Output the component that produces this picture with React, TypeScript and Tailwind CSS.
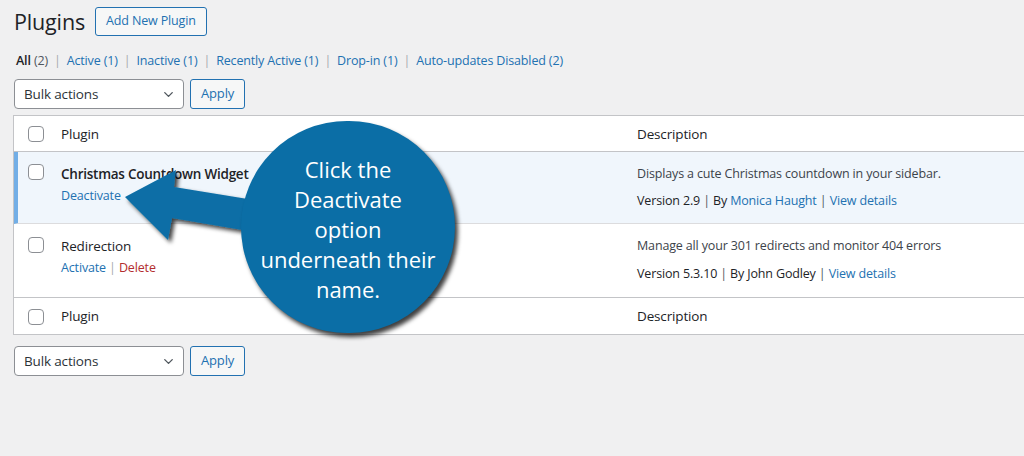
import { ChevronDown } from "lucide-react"

function Checkbox() {
  return <span className="block w-4 h-4 rounded-[4px] border border-[#8c8f94] bg-white" />
}

function BulkActions() {
  return (
    <div className="flex items-center gap-[6px]">
      <div className="w-[170px] h-[30px] rounded-[4px] border border-[#8c8f94] bg-white flex items-center justify-between pl-[9px] pr-[7px] text-[13.5px] text-[#2c3338]">
        <span>Bulk actions</span>
        <ChevronDown className="w-[15px] h-[15px] text-[#50575e]" strokeWidth={2.2} />
      </div>
      <button className="h-[30px] px-[10px] rounded-[3px] border border-[#2271b1] bg-[#f6f7f7] text-[13px] text-[#2271b1]">
        Apply
      </button>
    </div>
  )
}

function Sep() {
  return <span className="text-[#a7aaad] mx-[6px]">|</span>
}

function HeadRow({ border }: { border: string }) {
  return (
    <div className={`flex items-center h-[36px] pt-[1px] ${border} text-[13.5px] text-[#1d2327]`}>
      <div className="w-[46px] pl-[14px]">
        <Checkbox />
      </div>
      <div className="w-[577px] pl-[1px]">Plugin</div>
      <div>Description</div>
    </div>
  )
}

export default function App() {
  const filters = [
    ["Active", "(1)"],
    ["Inactive", "(1)"],
    ["Recently Active", "(1)"],
    ["Drop-in", "(1)"],
    ["Auto-updates Disabled", "(2)"],
  ]
  return (
    <div className="relative w-[1024px] h-[456px] overflow-hidden bg-[#f0f0f1] font-['Open_Sans',sans-serif] tracking-[-0.15px] text-[#3c434a]">
      <div className="pl-[13px] pt-[7px]">
        {/* Title */}
        <div className="flex items-center gap-[10px] pl-[1px]">
          <h1 className="text-[21.5px] leading-[29px] text-[#1d2327]">Plugins</h1>
          <button className="h-[29px] px-[10px] rounded-[3px] border border-[#2271b1] bg-[#f6f7f7] text-[12.5px] text-[#2271b1]">
            Add New Plugin
          </button>
        </div>

        {/* Filters */}
        <div className="mt-[15px] pl-[3px] text-[12.5px] leading-[20px] text-[#50575e]">
          <span className="font-semibold text-[#1d2327]">All</span> (2)
          {filters.map(([l, c]) => (
            <span key={l}>
              <Sep />
              <span className="text-[#2271b1]">
                {l} {c}
              </span>
            </span>
          ))}
        </div>

        <div className="mt-[8px] pl-[1px]">
          <BulkActions />
        </div>

        {/* Table */}
        <div className="mt-[6px] w-[1020px] border border-[#c3c4c7] bg-white">
          <HeadRow border="border-b border-[#c3c4c7]" />

          {/* Active row */}
          <div className="flex h-[72px] bg-[#f0f6fc] border-l-4 border-[#72aee6] border-b border-b-[#dcdcde]">
            <div className="w-[42px] pl-[10px] pt-[12px]">
              <Checkbox />
            </div>
            <div className="w-[577px] pl-[1px] pt-[12px]">
              <div className="text-[13.5px] leading-[20px] font-semibold tracking-[-0.25px] text-[#1d2327]">
                Christmas Countdown Widget
              </div>
              <div className="mt-[3px] text-[12.5px] leading-[18px] text-[#2271b1]">Deactivate</div>
            </div>
            <div className="pt-[12px] text-[12.5px] leading-[20px]">
              <div>Displays a cute Christmas countdown in your sidebar.</div>
              <div className="mt-[7px] text-[#1d2327]">
                Version 2.9 <span className="text-[#50575e]">|</span> By{" "}
                <span className="text-[#2271b1]">Monica Haught</span> <span className="text-[#50575e]">|</span>{" "}
                <span className="text-[#2271b1]">View details</span>
              </div>
            </div>
          </div>

          {/* Inactive row */}
          <div className="flex h-[74px] border-b border-[#c3c4c7]">
            <div className="w-[46px] pl-[14px] pt-[13px]">
              <Checkbox />
            </div>
            <div className="w-[577px] pl-[1px] pt-[12px]">
              <div className="text-[13.5px] leading-[20px] text-[#1d2327]">Redirection</div>
              <div className="mt-[3px] text-[12.5px] leading-[18px] text-[#2271b1]">
                Activate <span className="text-[#a7aaad]">|</span> <span className="text-[#b32d2e]">Delete</span>
              </div>
            </div>
            <div className="pt-[12px] text-[12.5px] leading-[20px]">
              <div>Manage all your 301 redirects and monitor 404 errors</div>
              <div className="mt-[8px] text-[#1d2327]">
                Version 5.3.10 <span className="text-[#50575e]">|</span> By John Godley{" "}
                <span className="text-[#50575e]">|</span> <span className="text-[#2271b1]">View details</span>
              </div>
            </div>
          </div>

          <HeadRow border="" />
        </div>

        <div className="mt-[11px] pl-[1px]">
          <BulkActions />
        </div>
      </div>

      {/* Callout arrow */}
      <svg className="absolute left-0 top-0 w-[1024px] h-[456px] pointer-events-none" viewBox="0 0 1024 456">
        <defs>
          <filter id="sh" x="-20%" y="-20%" width="140%" height="140%">
            <feDropShadow dx="3" dy="3" stdDeviation="2" floodColor="#000" floodOpacity="0.75" />
          </filter>
        </defs>
        <polygon
          points="125,197 176,170 174,187 260,201 260,233 172,218 168,240"
          fill="#0b6ea6"
          filter="url(#sh)"
        />
      </svg>

      {/* Callout circle */}
      <div className="absolute left-[241px] top-[121px] w-[214px] h-[212px] rounded-full bg-[#0b6ea6] shadow-[3px_4px_4px_rgba(0,0,0,0.75)] flex flex-col items-center justify-center text-white text-[22px] leading-[30px] tracking-normal text-center pt-[3px]">
        <div>Click the</div>
        <div>Deactivate</div>
        <div>option</div>
        <div>underneath their</div>
        <div>name.</div>
      </div>
    </div>
  )
}
